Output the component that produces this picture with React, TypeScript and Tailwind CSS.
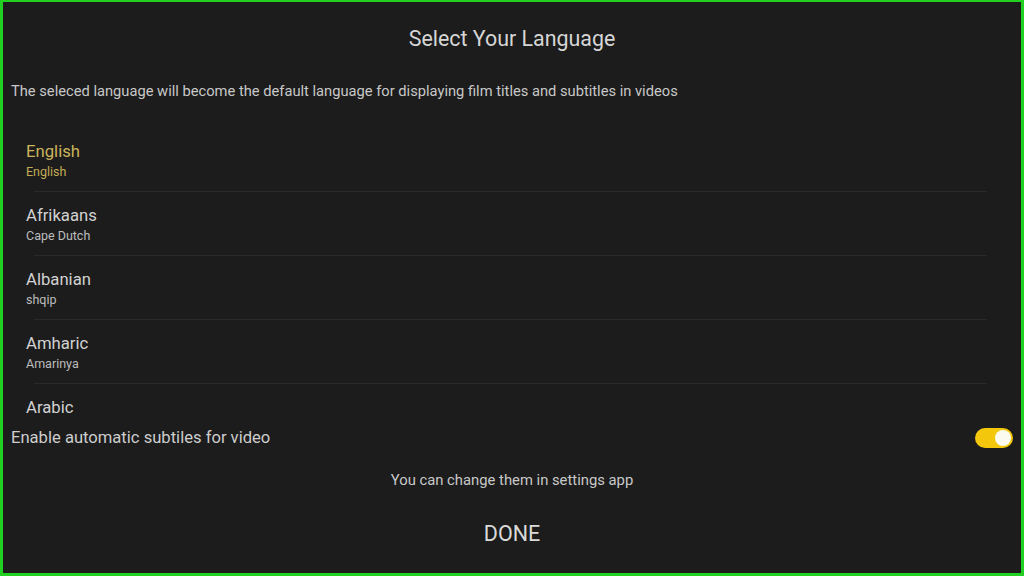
import { useState } from "react";

const languages = [
  { name: "English", native: "English" },
  { name: "Afrikaans", native: "Cape Dutch" },
  { name: "Albanian", native: "shqip" },
  { name: "Amharic", native: "Amarinya" },
  { name: "Arabic", native: "" },
];

function Toggle({ on, onChange }: { on: boolean; onChange: () => void }) {
  return (
    <button
      onClick={onChange}
      className={`w-[38px] h-[20px] rounded-full flex items-center px-[2px] ${on ? "bg-[#f2c70c] justify-end" : "bg-[#555] justify-start"}`}
    >
      <span className="w-[16px] h-[16px] rounded-full bg-[#fbfbf0]" />
    </button>
  );
}

export default function App() {
  const [selected, setSelected] = useState(0);
  const [auto, setAuto] = useState(true);

  return (
    <div
      className="w-[1024px] h-[576px] bg-[#1c1c1c] border-[3px] border-t-2 border-[#22d022] text-[#cfcfcf] flex flex-col overflow-hidden"
      style={{ fontFamily: "Roboto, 'Noto Sans', sans-serif" }}
    >
      <div className="pt-[23px] text-center text-[21.4px] leading-[28px] text-[#d6d6d6]">Select Your Language</div>
      <div className="mt-[28px] pl-2 text-[14.7px] leading-[20px] text-[#c8c8c8]">
        The seleced language will become the default language for displaying film titles and subtitles in videos
      </div>

      {/* language list */}
      <div className="mt-[27px] h-[292px] overflow-hidden">
        {languages.map((lang, i) => (
          <div key={lang.name} className="cursor-pointer" onClick={() => setSelected(i)}>
            <div className={`pl-[23px] pt-[14px] pb-[11px] ${i === selected ? "text-[#cbb45c]" : "text-[#d2d2d2]"}`}>
              <div className="text-[16.7px] leading-[20px]">{lang.name}</div>
              {lang.native && (
                <div className={`mt-[2px] text-[12.5px] leading-[16px] ${i === selected ? "text-[#c4ad55]" : "text-[#bdbdbd]"}`}>
                  {lang.native}
                </div>
              )}
            </div>
            {lang.native && <div className="ml-[31px] w-[953px] h-px bg-[#292929]" />}
          </div>
        ))}
      </div>

      <div className="mt-[3px] h-[30px] flex items-center justify-between pl-2 pr-2">
        <span className="text-[16.6px] leading-[20px] text-[#cdcdcd]">Enable automatic subtiles for video</span>
        <Toggle on={auto} onChange={() => setAuto(!auto)} />
      </div>

      <div className="mt-[17px] text-center text-[14.8px] leading-[20px] text-[#c8c8c8]">You can change them in settings app</div>
      <div className="mt-[30px] text-center text-[21.5px] leading-[28px] text-[#dadada]">DONE</div>
    </div>
  );
}
